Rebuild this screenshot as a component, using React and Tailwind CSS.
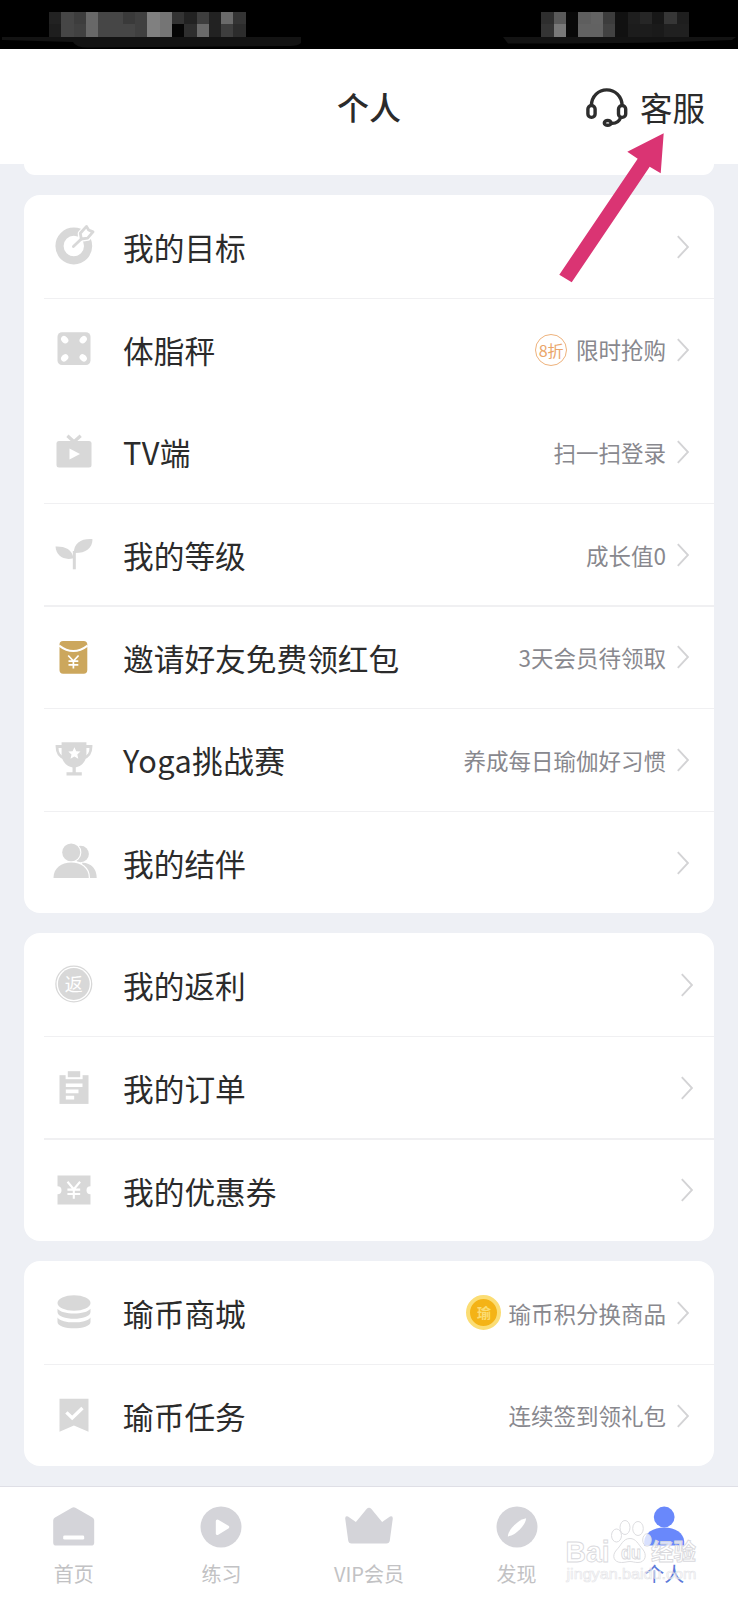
import React from 'react';

const leftBlocks = [
  ['#222222', '#464646', '#3d3d3d', '#686868', '#464646', '#464646', '#3a3a3a', '#404040', '#808080', '#757575', '#333333', '#222222', '#3e3e3e', '#222222', '#6a6a6a', '#343434'],
  ['#1e1e1e', '#464646', '#414141', '#686868', '#464646', '#464646', '#464646', '#404040', '#808080', '#757575', '#050505', '#2e2e2e', '#6a6a6a', '#222222', '#3e3e3e', '#2c2c2c'],
];

const rightBlocks = [
  ['#2e2e2e', '#5a5a5a', '#080808', '#5e5e5e', '#636363', '#3c3c3c', '#111111', '#1e1e1e', '#262626', '#171717', '#363636', '#1e1e1e'],
  ['#343434', '#787878', '#080808', '#626262', '#626262', '#424242', '#111111', '#1c1c1c', '#1c1c1c', '#1a1a1a', '#202020', '#202020'],
];

const G = '#d8d8d8';

function Icon({ children }) {
  return (
    <svg width="44" height="44" viewBox="0 0 44 44" fill={G} className="mb-[1.5px] shrink-0 overflow-visible">
      {children}
    </svg>
  );
}

const TargetIcon = () => (
  <Icon>
    <circle cx="21.8" cy="22" r="14.3" fill="none" stroke={G} strokeWidth="8.2" />
    <path d="M21.2 22.8 L29 15.5 L28.5 9.5 L34.5 3 L36.6 6 L41 8 L36 14 L29.5 15" fill="#fff" stroke="#fff" strokeWidth="5.6" strokeLinejoin="round" />
    <path d="M21.4 22.6 L29.5 14.8" stroke={G} strokeWidth="2.8" strokeLinecap="round" />
    <path d="M29.3 15 L28.3 9.3 L34.5 2.4 L36.6 6 L41 7.9 L35.6 14.2 Z" fill="#fff" stroke={G} strokeWidth="2.8" strokeLinejoin="round" />
  </Icon>
);

const ScaleIcon = () => (
  <Icon>
    <rect x="5.5" y="5.2" width="33" height="32.8" rx="4.5" />
    <g fill="#fff">
      <ellipse cx="12.7" cy="12.7" rx="4" ry="3.2" transform="rotate(45 12.7 12.7)" />
      <ellipse cx="31.2" cy="12.7" rx="4" ry="3.2" transform="rotate(-45 31.2 12.7)" />
      <ellipse cx="12.7" cy="30.8" rx="4" ry="3.2" transform="rotate(-45 12.7 30.8)" />
      <ellipse cx="31.2" cy="30.8" rx="4" ry="3.2" transform="rotate(45 31.2 30.8)" />
    </g>
  </Icon>
);

const TvIcon = () => (
  <Icon>
    <rect x="4.5" y="12" width="35" height="26.4" rx="2.5" />
    <path d="M15.4 6.8 L22 12.8 L28.7 6.8" fill="none" stroke={G} strokeWidth="3.2" />
    <path d="M17.5 19.4 L28 25 L17.5 30.6 Z" fill="#fff" />
  </Icon>
);

const SproutIcon = () => (
  <Icon>
    <path d="M3.5 14.6 C12 14.2 20.3 17 21.4 26.3 C11.5 28.6 4.3 24 3.5 14.6 Z" />
    <path d="M40.5 7.2 C29.5 6.4 21.8 11 21.8 21 C33.5 21.4 40.3 16.5 40.5 7.2 Z" />
    <path d="M20.8 19 H23.8 V37.3 H20.8 Z" />
  </Icon>
);

const PacketIcon = () => (
  <Icon>
    <rect x="7.5" y="6" width="27.8" height="32.7" rx="3.6" fill="#cca75d" />
    <path d="M7.2 10.6 Q21.3 21.5 35.6 10.6" fill="none" stroke="#fff" strokeWidth="2" />
    <path d="M16.2 20.5 L21.4 26 L26.6 20.5 M21.4 26 V33.5 M16.5 26.2 H26.3 M16.5 29.8 H26.3" fill="none" stroke="#fff" strokeWidth="1.7" />
  </Icon>
);

const TrophyIcon = () => (
  <Icon>
    <path d="M9.6 5.2 H34.4 V17 C34.4 25 29 29.8 22 30.8 C15 29.8 9.6 25 9.6 17 Z" />
    <path d="M11 9.5 H5 C5 16 7 19.5 13 21.5 M33 9.5 H39 C39 16 37 19.5 31 21.5" fill="none" stroke={G} strokeWidth="2.8" />
    <path d="M20.5 30 H23.8 V35.2 H29.8 V38.6 H14.5 V35.2 H20.5 Z" />
    <path d="M22.4 10.2 L24.2 14.2 L28.5 14.6 L25.3 17.5 L26.3 21.8 L22.4 19.5 L18.5 21.8 L19.5 17.5 L16.3 14.6 L20.6 14.2 Z" fill="#fff" />
  </Icon>
);

const FriendsIcon = () => (
  <Icon>
    <circle cx="28.6" cy="14" r="8.3" />
    <path d="M30 22.8 C39 22.5 44.7 29 44.7 38 H34 Z" />
    <circle cx="19.2" cy="12.4" r="9" stroke="#fff" strokeWidth="2.4" paintOrder="stroke" />
    <path d="M1.5 38 C1.5 28 9.5 22.6 19.2 22.6 C29 22.6 36.8 28 36.8 38 Z" stroke="#fff" strokeWidth="2.4" paintOrder="stroke" />
  </Icon>
);

const RebateIcon = () => (
  <Icon>
    <circle cx="21.8" cy="22" r="17.9" fill="none" stroke={G} strokeWidth="1.3" />
    <circle cx="21.8" cy="22" r="15.9" />
    <text x="21.8" y="28.6" fontSize="18" textAnchor="middle" fill="#fff">返</text>
  </Icon>
);

const OrderIcon = () => (
  <Icon>
    <rect x="7.5" y="10.2" width="29" height="28.7" />
    <rect x="13.6" y="8" width="17" height="6.2" fill="#fff" />
    <rect x="15.8" y="6.2" width="12.4" height="6" />
    <path d="M13.8 20.2 H30.5 M13.8 26.4 H26.5 M13.8 32.6 H22.2" stroke="#fff" strokeWidth="3.6" />
  </Icon>
);

const CouponIcon = () => (
  <Icon>
    <path d="M5.5 7.6 H38.5 V18.3 A4 4 0 0 0 38.5 26.3 V36.6 H5.5 V26.3 A4 4 0 0 0 5.5 18.3 Z" />
    <path d="M15.5 13.8 L21.8 21.3 L28.1 13.8 M21.8 21.3 V30.8 M15.4 21.6 H28.2 M15.4 26 H28.2" fill="none" stroke="#fff" strokeWidth="2.1" />
  </Icon>
);

const CoinsIcon = () => (
  <Icon>
    <ellipse cx="22" cy="13" rx="16.5" ry="7.7" />
    <path d="M5.5 18.7 C10 25 34 25 38.5 18.7 V22 C38.5 31 5.5 31 5.5 22 Z" />
    <path d="M5.5 27.4 C10 34 34 34 38.5 27.4 V32 C38.5 40.4 5.5 40.4 5.5 32 Z" />
  </Icon>
);

const TaskIcon = () => (
  <Icon>
    <path d="M7.5 5.7 H36.5 V38.7 L21.9 32.6 L7.5 38.7 Z" />
    <path d="M14.4 19.4 L20.2 25 L30.5 15" fill="none" stroke="#fff" strokeWidth="3.4" />
  </Icon>
);

const SaleBadge = () => (
  <span className="mr-[9px] flex size-8 items-center justify-center rounded-full border-[1.5px] border-[#eeb27c] text-[16px] tracking-[-0.3px] text-[#eaa56a]">
    8折
  </span>
);

const CoinBadge = () => (
  <span className="mr-[7px] flex size-[35px] items-center justify-center rounded-full border-[4.5px] border-[#fbdd74] bg-[#f4b316] text-[14px] font-bold text-[#fbdc72]">
    瑜
  </span>
);

const groups = [
  {
    arrow: 'mr-[25px]',
    rows: [
      { icon: TargetIcon, label: '我的目标' },
      { icon: ScaleIcon, label: '体脂秤', note: '限时抢购', badge: SaleBadge, line: true },
      { icon: TvIcon, label: 'TV端', note: '扫一扫登录' },
      { icon: SproutIcon, label: '我的等级', note: '成长值0', line: true },
      { icon: PacketIcon, label: '邀请好友免费领红包', note: '3天会员待领取', line: true },
      { icon: TrophyIcon, label: 'Yoga挑战赛', note: '养成每日瑜伽好习惯', line: true },
      { icon: FriendsIcon, label: '我的结伴', line: true },
    ],
  },
  {
    arrow: 'mr-[21px]',
    rows: [
      { icon: RebateIcon, label: '我的返利' },
      { icon: OrderIcon, label: '我的订单', line: true },
      { icon: CouponIcon, label: '我的优惠券', line: true },
    ],
  },
  {
    arrow: 'mr-[25px]',
    rows: [
      { icon: CoinsIcon, label: '瑜币商城', note: '瑜币积分换商品', badge: CoinBadge },
      { icon: TaskIcon, label: '瑜币任务', note: '连续签到领礼包', line: true },
    ],
  },
];

const tabs = [
  {
    label: '首页',
    icon: (
      <>
        <path d="M20 2.8 Q21.7 1.8 23.4 2.8 L40.4 12.6 Q42.2 13.7 42.2 15.6 V37.4 Q42.2 40.6 39 40.6 H4.4 Q1.2 40.6 1.2 37.4 V15.6 Q1.2 13.7 3 12.6 Z" />
        <rect x="11.2" y="30.4" width="21" height="4.2" rx="1.4" fill="#fff" />
      </>
    ),
  },
  {
    label: '练习',
    icon: (
      <>
        <circle cx="22" cy="22" r="20.5" />
        <path d="M18.4 16 L28.6 22.2 L18.4 28.4 Z" fill="#fff" stroke="#fff" strokeWidth="3.2" strokeLinejoin="round" />
      </>
    ),
  },
  {
    label: 'VIP会员',
    icon: (
      <path d="M-1.8 13.4 Q-1.8 10.6 1 11.6 L8.9 16.9 L19.6 4 Q22 1.6 24.4 4 L35.1 16.9 L43 11.6 Q45.8 10.6 45.8 13.4 L42.8 35.6 Q42.4 38.6 39.4 38.6 H4.6 Q1.6 38.6 1.2 35.6 Z" />
    ),
  },
  {
    label: '发现',
    icon: (
      <>
        <circle cx="22" cy="22" r="20.5" />
        <path d="M12.8 31.4 C13.6 26.5 16 23.4 19.2 20.2 C22.5 17 26.5 13.8 31.2 13.2 C30.4 18 28 21.2 24.8 24.4 C21.5 27.6 17.5 30.8 12.8 31.4 Z" fill="#fff" />
      </>
    ),
  },
  {
    label: '个人',
    active: true,
    icon: (
      <>
        <circle cx="22.2" cy="12" r="10.4" />
        <path d="M2.2 40.6 V36.5 C2.8 28 11 22.6 22.2 22.6 C33.4 22.6 41.6 28 42.2 36.5 V40.6 Z" />
      </>
    ),
  },
];

function Mosaic({ blocks }) {
  return (
    <div>
      {blocks.map((row, i) => (
        <div key={i} className="flex">
          {row.map((color, j) => (
            <span key={j} className="h-[12.4px] w-[12.3px]" style={{ backgroundColor: color }} />
          ))}
        </div>
      ))}
    </div>
  );
}

function Row({ row, arrow }) {
  const RowIcon = row.icon;
  const Badge = row.badge;
  return (
    <div className="flex h-[102.6px] flex-col">
      <div className={row.line ? 'ml-5 h-[1.5px] bg-[#f0f0f2]' : 'h-[1.5px]'} />
      <div className="flex min-h-0 flex-1 items-center pl-7">
        <RowIcon />
        <span className="ml-[27px] pt-px text-[30.7px] leading-none text-[#2b2b2b]">
          {/^[A-Z]/.test(row.label) ? <span className="tracking-[0.4px]">{row.label}</span> : row.label}
        </span>
        <div className="ml-auto flex items-center">
          {Badge && <Badge />}
          {row.note && <span className="text-[22.5px] leading-none text-[#88888e]">{row.note}</span>}
        </div>
        <svg width="12" height="24" viewBox="0 0 12 24" fill="none" stroke="#d3d3d5" strokeWidth="1.9" className={`ml-[11px] ${arrow}`}>
          <path d="M0.8 1.2 L11 12 L0.8 22.8" />
        </svg>
      </div>
    </div>
  );
}

function Watermark() {
  return (
    <svg width="145" height="72" viewBox="0 0 145 72" className="absolute left-[560px] top-[1517px] overflow-visible font-['Liberation_Sans','Noto_Sans_CJK_SC',sans-serif]">
      <g fill="#fff" fillOpacity="0.75" stroke="#d9d9dd" strokeWidth="0.9">
        <text x="5.5" y="45" fontSize="30" fontWeight="700" textLength="44" lengthAdjust="spacingAndGlyphs">Bai</text>
        <ellipse cx="56.5" cy="18.5" rx="5" ry="6.5" />
        <ellipse cx="65" cy="10.5" rx="5" ry="7" />
        <ellipse cx="78" cy="11.5" rx="5.3" ry="7" />
        <ellipse cx="87" cy="23" rx="4.3" ry="6.2" />
        <path d="M70 21.5 C76 21.5 78 27 82.5 32 C87.5 37.5 85.5 45.5 78 45.5 C74 45.5 73 44.5 70 44.5 C67 44.5 65.5 45.5 61.5 45.5 C53.5 45.5 51.5 38.5 56.5 33 C61.5 28 63 21.5 70 21.5 Z" />
        <text x="61" y="42" fontSize="18" fontWeight="700" textLength="20" lengthAdjust="spacingAndGlyphs">du</text>
        <text x="91" y="43" fontSize="22.5" fontWeight="700">经验</text>
      </g>
      <text x="6.5" y="61.5" fontSize="15.5" textLength="130" lengthAdjust="spacingAndGlyphs" fill="#fff" fillOpacity="0.35" stroke="#e0e0e4" strokeWidth="0.7" strokeOpacity="0.8">
        jingyan.baidu.com
      </text>
    </svg>
  );
}

export default function App() {
  return (
    <div className="relative flex h-[1600px] w-[738px] flex-col overflow-hidden bg-[#eef0f5] font-['Noto_Sans_CJK_SC',sans-serif]">
      <div className="flex h-[49px] shrink-0 justify-between bg-black pl-[49px] pr-[49px] pt-3">
        <Mosaic blocks={leftBlocks} />
        <Mosaic blocks={rightBlocks} />
      </div>

      <header className="grid h-[115px] shrink-0 grid-cols-3 items-center bg-white">
        <h1 className="col-start-2 pb-0.5 text-center text-[32px] font-medium leading-none text-[#2b2b2b]">个人</h1>
        <div className="flex items-center justify-end pr-[33px] pt-0.5">
          <svg width="42" height="40" viewBox="0 0 42 40" fill="none" stroke="#2d2d2d" strokeWidth="3.4" className="mr-3">
            <path d="M5.3 17.5 C5.8 8 12.5 1.9 20.7 1.9 C29 1.9 35.7 8 36.2 17.5" />
            <rect x="1.9" y="17.6" width="7.2" height="11.8" rx="3.4" />
            <rect x="32.5" y="17.6" width="7.2" height="11.8" rx="3.4" />
            <path d="M34.7 29.5 C33.2 33.5 30.3 35.6 25.7 35.4" />
            <ellipse cx="21.7" cy="34.9" rx="3.4" ry="2.4" />
          </svg>
          <span className="text-[32.5px] leading-none text-[#2b2b2b]">客服</span>
        </div>
      </header>

      <main className="flex flex-1 flex-col gap-5 px-6">
        <div className="h-[11px] rounded-b-[16px] bg-white" />
        {groups.map((group, i) => (
          <section key={i} className="overflow-hidden rounded-[16px] bg-white">
            {group.rows.map((row) => (
              <Row key={row.label} row={row} arrow={group.arrow} />
            ))}
          </section>
        ))}
      </main>

      <nav className="grid h-[114px] shrink-0 grid-cols-5 border-t border-[#dfdfe6] bg-white pt-[18px]">
        {tabs.map((tab) => (
          <div key={tab.label} className="flex flex-col items-center">
            <svg width="44" height="44" viewBox="0 0 44 44" className="overflow-visible" fill={tab.active ? '#6988fb' : '#d4d4d9'}>
              {tab.icon}
            </svg>
            <span className={tab.active ? 'mt-[15px] text-[20px] leading-none text-[#5b78d8]' : 'mt-[15px] text-[20px] leading-none text-[#c2c2c4]'}>
              {tab.label}
            </span>
          </div>
        ))}
      </nav>

      <Watermark />

      {/* smudges under the blurred status items */}
      <svg width="738" height="12" viewBox="0 0 738 12" fill="#131313" className="absolute left-0 top-[37px]">
        <path d="M2 0 H301 V6 Q298 9 290 9 L90 10.5 Q76 11 73 5 L2 3 Z" />
        <path d="M503 0 H736 L732 3 Q640 7 508 6.5 Z" />
      </svg>

      {/* arrow pointing at the support button */}
      <svg width="106" height="152" viewBox="0 0 106 152" fill="#da3473" className="absolute left-[559px] top-[132px]">
        <path d="M104.7 1.3 L68.3 19.7 L78.7 26.7 L0.3 142.7 L12.7 150.3 L90.7 34.7 L101.7 41.3 Z" />
      </svg>
    </div>
  );
}
